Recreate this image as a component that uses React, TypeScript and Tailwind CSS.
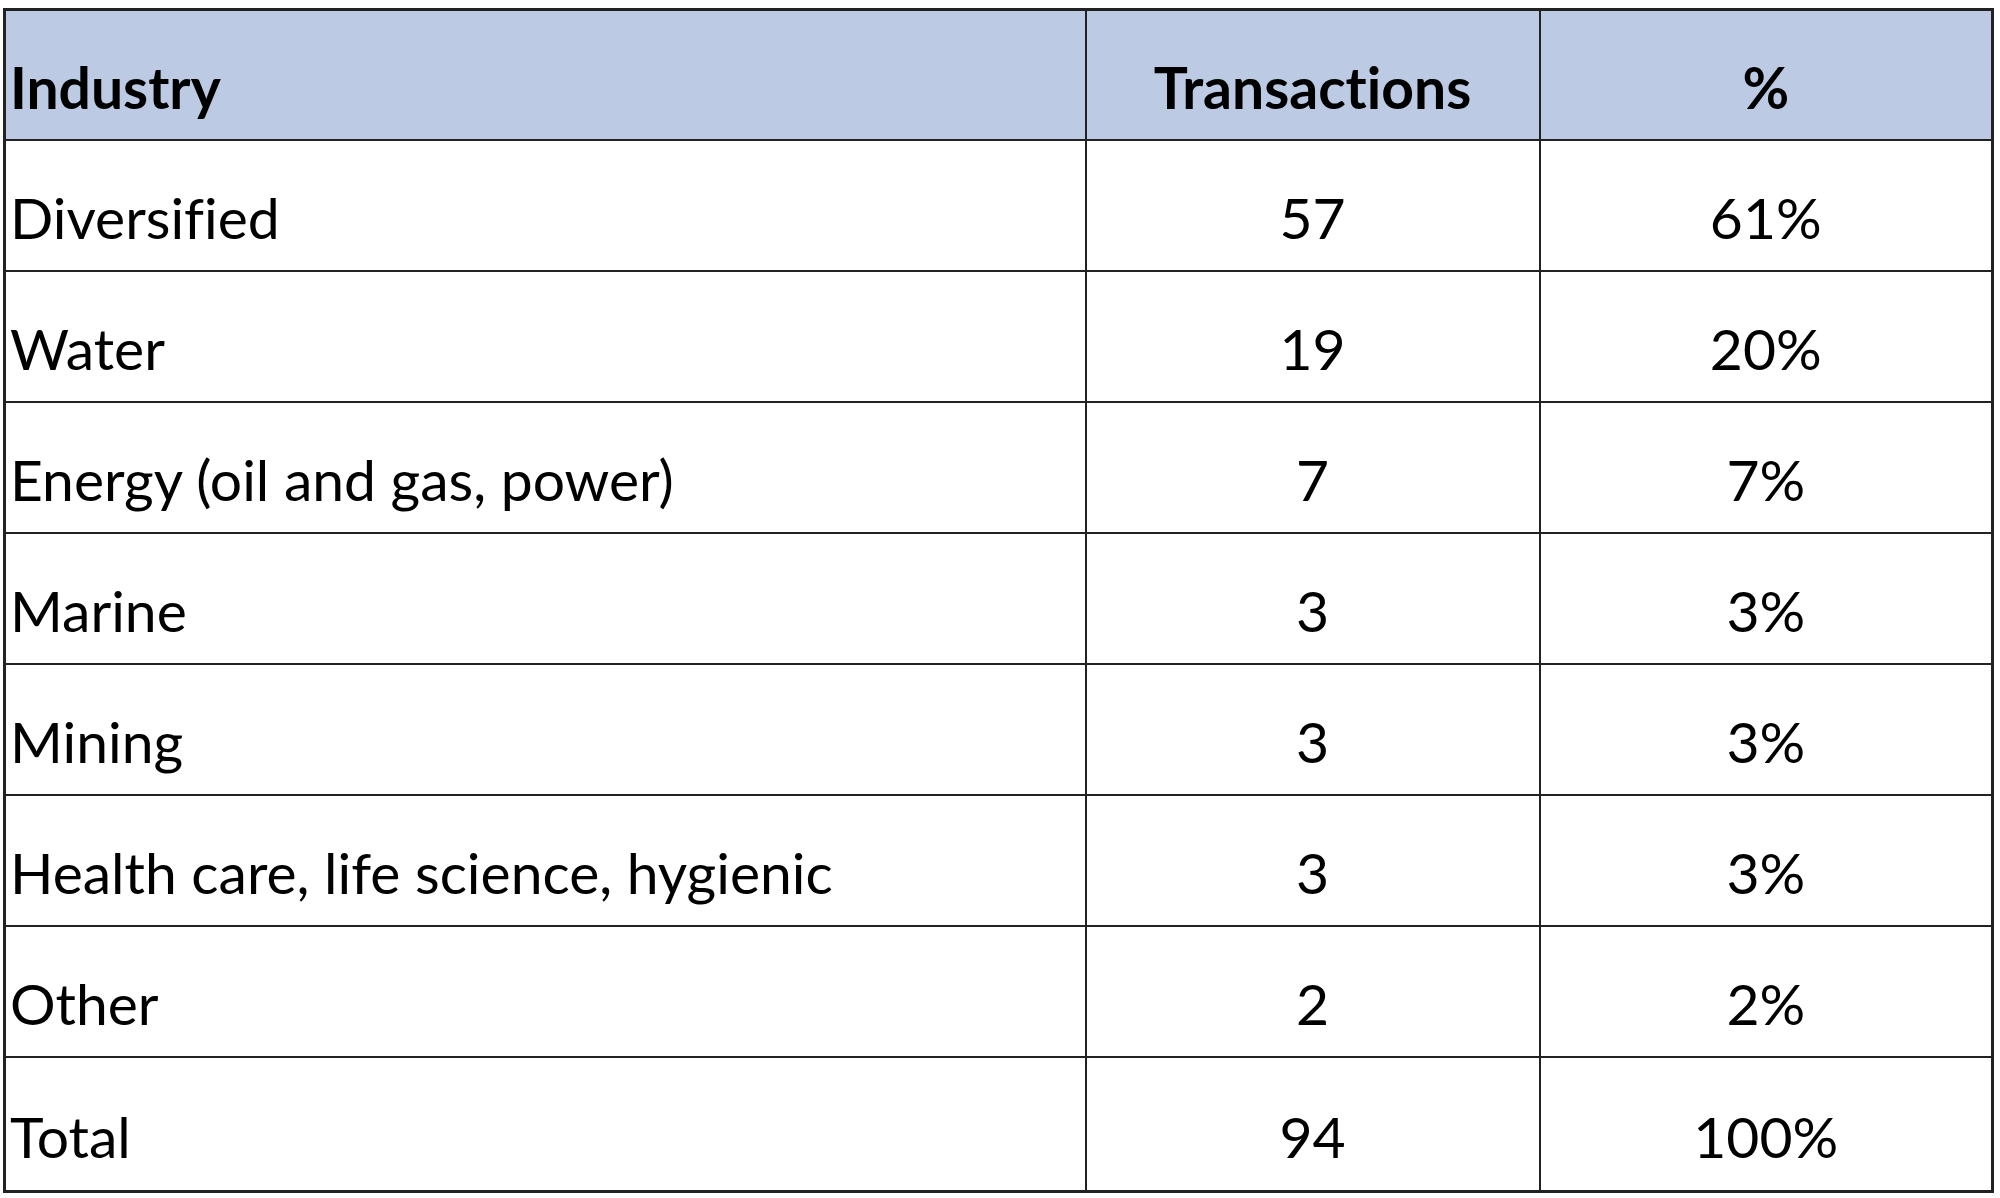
const rows = [
  { industry: "Diversified", count: "57", pct: "61%" },
  { industry: "Water", count: "19", pct: "20%" },
  { industry: "Energy (oil and gas, power)", count: "7", pct: "7%" },
  { industry: "Marine", count: "3", pct: "3%" },
  { industry: "Mining", count: "3", pct: "3%" },
  { industry: "Health care, life science, hygienic", count: "3", pct: "3%" },
  { industry: "Other", count: "2", pct: "2%" },
  { industry: "Total", count: "94", pct: "100%" },
];

export default function App() {
  return (
    <div className="min-h-[1198px] w-[2000px] bg-white pl-[3px] pt-[8px] font-['Lato',sans-serif] text-black [font-variant-ligatures:none]">
      <table className="w-[1991px] border-collapse border-[3px] border-[#222]">
        <thead>
          <tr className="h-[130px] bg-[#bccbe3] text-[57px] font-bold">
            <th className="w-[1081px] border-2 border-[#222] px-[4px] pt-[26px] text-left align-middle">
              Industry
            </th>
            <th className="w-[454px] border-2 border-[#222] pt-[26px] text-center align-middle">
              Transactions
            </th>
            <th className="border-2 border-[#222] pt-[26px] text-center align-middle">%</th>
          </tr>
        </thead>
        <tbody className="text-[57px]">
          {rows.map((r, i) => (
            <tr key={r.industry} className={i === rows.length - 1 ? "h-[135px]" : "h-[131px]"}>
              <td className="border-2 border-[#222] px-[4px] pt-[26px] text-left">
                {r.industry}
              </td>
              <td className="border-2 border-[#222] pt-[26px] text-center">{r.count}</td>
              <td className="border-2 border-[#222] pt-[26px] text-center">{r.pct}</td>
            </tr>
          ))}
        </tbody>
      </table>
    </div>
  );
}
